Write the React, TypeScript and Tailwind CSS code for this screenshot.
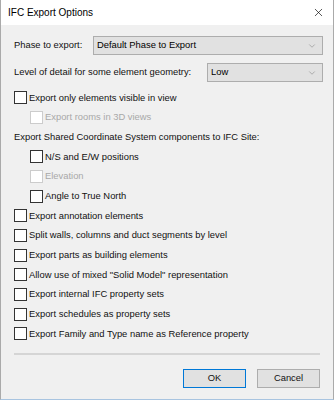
import { ChevronDown, X } from 'lucide-react'

const font = { fontFamily: '"Liberation Sans", Arial, sans-serif' }

const Combo = ({ value, className }: { value: string; className: string }) => (
  <div
    className={`flex h-[19px] items-center justify-between border border-[#adadad] bg-[#e1e1e1] pl-[3px] pr-[5px] text-black ${className}`}
  >
    <span className="whitespace-nowrap">{value}</span>
    <ChevronDown size={10} strokeWidth={1.2} className="text-[#777]" />
  </div>
)

const Check = ({
  label,
  indent = false,
  disabled = false,
}: {
  label: string
  indent?: boolean
  disabled?: boolean
}) => (
  <div className={`flex h-[19.67px] items-center gap-[2px] ${indent ? 'pl-[16px]' : ''}`}>
    <span
      className={`h-[13px] w-[13px] shrink-0 border bg-white ${
        disabled ? 'border-[#cccccc]' : 'border-[#333333]'
      }`}
    />
    <span className={`whitespace-nowrap ${disabled ? 'text-[#a8a8a8]' : 'text-[#111]'}`}>{label}</span>
  </div>
)

const App = () => {
  return (
    <div
      className="flex h-[400px] w-[334px] flex-col overflow-hidden border-x border-b border-x-[#aaaaaa] border-b-[#a8c4e0] bg-[#f0f0f0] text-[9.4px] text-[#111]"
      style={font}
    >
      <div className="flex h-[25px] shrink-0 items-center justify-between bg-white pl-[7px] pr-[8px]">
        <span className="text-[10px] text-black">IFC Export Options</span>
        <X size={13} strokeWidth={1.2} className="text-black" />
      </div>

      <div className="flex flex-col px-[13px] pt-[11px]">
        <div className="flex items-center">
          <span className="w-[79px] shrink-0 whitespace-nowrap">Phase to export:</span>
          <Combo value="Default Phase to Export" className="mr-[-3px] flex-1" />
        </div>
        <div className="mt-[8px] flex items-center">
          <span className="w-[193px] shrink-0 whitespace-nowrap">
            Level of detail for some element geometry:
          </span>
          <Combo value="Low" className="mr-[-3px] flex-1" />
        </div>

        <div className="mt-[6px] flex flex-col">
          <Check label="Export only elements visible in view" />
          <Check label="Export rooms in 3D views" indent disabled />
          <div className="flex h-[19.67px] items-center whitespace-nowrap">
            Export Shared Coordinate System components to IFC Site:
          </div>
          <Check label="N/S and E/W positions" indent />
          <Check label="Elevation" indent disabled />
          <Check label="Angle to True North" indent />
          <Check label="Export annotation elements" />
          <Check label="Split walls, columns and duct segments by level" />
          <Check label="Export parts as building elements" />
          <Check label={'Allow use of mixed "Solid Model" representation'} />
          <Check label="Export internal IFC property sets" />
          <Check label="Export schedules as property sets" />
          <Check label="Export Family and Type name as Reference property" />
        </div>

        <div className="mt-[9px] h-[2px] bg-[#d5d5d5]" />

        <div className="mt-[14px] flex justify-end gap-[11px]">
          <button className="h-[19px] w-[63px] border border-[#0078d7] bg-[#e1e1e1] text-[9.4px]">
            OK
          </button>
          <button className="h-[19px] w-[63px] border border-[#adadad] bg-[#e1e1e1] text-[9.4px]">
            Cancel
          </button>
        </div>
      </div>
    </div>
  )
}

export default App
